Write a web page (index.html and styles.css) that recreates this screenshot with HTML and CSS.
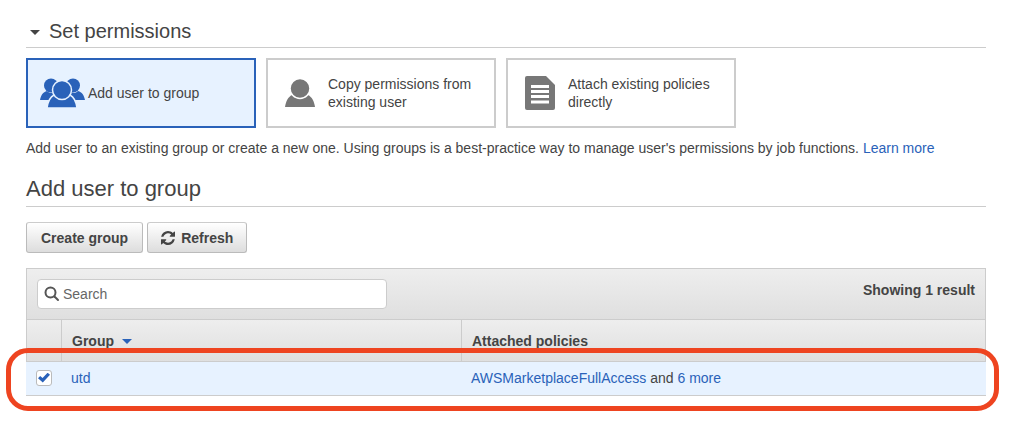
FILE: index.html
```html
<!DOCTYPE html>
<html lang="en">
<head>
  <meta charset="UTF-8" />
  <meta name="viewport" content="width=device-width, initial-scale=1.0"/>
  <title>Set permissions</title>
  <link rel="stylesheet" href="styles.css">
</head>
<body>

  <main class="page">
    <h2 class="section-title">
      <button class="toggle" type="button" aria-label="Collapse section"><span class="caret"></span></button>
      Set permissions
    </h2>

    <div class="options">
      <button class="option selected" type="button">
        <svg class="icon-group" width="45" height="30" viewBox="0 0 45 30" aria-hidden="true">
          <circle cx="11" cy="7.500" r="7"/>
          <circle cx="33" cy="7.500" r="7"/>
          <path d="M0 22C1 17 3 14 7 13Q11 17 15 13L19 22Z"/>
          <path d="M45 22C44 17 42 14 38 13Q34 17 30 13L26 22Z"/>
          <path class="outline" d="M7 30C8 23 10 19 14 17H30C34 19 36 23 37 30Z"/>
          <circle class="outline" cx="22" cy="12" r="9.500"/>
        </svg>
        <span>Add user to group</span>
      </button>
      <button class="option" type="button">
        <svg class="icon-user" width="30" height="28" viewBox="0 0 30 28" aria-hidden="true">
          <path d="M0 28C1 22 3 18 7 16H23C27 18 29 22 30 28Z"/>
          <circle class="outline" cx="15" cy="9.500" r="10"/>
        </svg>
        <span>Copy permissions from existing user</span>
      </button>
      <button class="option" type="button">
        <svg class="icon-doc" width="30" height="34" viewBox="0 0 30 34" aria-hidden="true">
          <path d="M2 0H21L30 9V32Q30 34 28 34H2Q0 34 0 32V2Q0 0 2 0Z"/>
          <path class="lines" d="M6 10.500H24M6 15.500H24M6 20.500H24M6 26H24"/>
        </svg>
        <span>Attach existing policies directly</span>
      </button>
    </div>

    <p class="description">Add user to an existing group or create a new one. Using groups is a best-practice way to manage user's permissions by job functions. <a href="#">Learn more</a></p>

    <h2 class="section-title sub">Add user to group</h2>

    <div class="actions">
      <button class="btn" type="button">Create group</button>
      <button class="btn" type="button">
        <svg width="14" height="14" viewBox="0 0 1536 1536" aria-hidden="true"><path d="M1511 928q0 5-1 7-64 268-268 434.500t-478 166.500q-146 0-282.500-55t-243.500-157l-129 129q-19 19-45 19t-45-19-19-45v-448q0-26 19-45t45-19h448q26 0 45 19t19 45-19 45l-137 137q71 66 161 102t187 36q134 0 250-65t186-179q11-17 53-117 8-23 30-23h192q13 0 22.500 9.500t9.500 22.500zm25-800v448q0 26-19 45t-45 19h-448q-26 0-45-19t-19-45 19-45l138-138q-148-137-349-137-134 0-250 65t-186 179q-11 17-53 117-8 23-30 23h-199q-13 0-22.500-9.500t-9.500-22.500v-7q65-268 270-434.500t480-166.500q146 0 284 55.500t245 156.500l130-129q19-19 45-19t45 19 19 45z"/></svg>
        Refresh
      </button>
    </div>

    <div class="groups">
      <div class="toolbar">
        <div class="search">
          <svg width="16" height="16" viewBox="0 0 16 16" aria-hidden="true">
            <circle cx="6.500" cy="6.500" r="5"/>
            <path d="M10.500 10.500L14 14"/>
          </svg>
          <input type="text" id="search" placeholder="Search" aria-label="Search">
        </div>
        <span class="count">Showing 1 result</span>
      </div>
      <table class="group-table">
        <thead>
          <tr>
            <th class="col-check"></th>
            <th class="col-group">Group <span class="caret sort"></span></th>
            <th>Attached policies</th>
          </tr>
        </thead>
        <tbody>
          <tr>
            <td class="col-check"><input type="checkbox" class="check" aria-label="utd" checked></td>
            <td><a href="#">utd</a></td>
            <td><a href="#">AWSMarketplaceFullAccess</a> and <a href="#">6 more</a></td>
          </tr>
        </tbody>
      </table>
      <div class="highlight"></div>
    </div>
  </main>

</body>
</html>
```
FILE: styles.css
```css
* {
  box-sizing: border-box;
}

body {
  margin: 0;
  font-family: "Liberation Sans", Arial, sans-serif;
  font-size: 14px;
  line-height: 18px;
  background: #fff;
  color: #444;
}

button,
input {
  font: inherit;
  color: inherit;
}

a {
  color: #2a62b9;
  text-decoration: none;
}

.page {
  padding: 14px 23px 32px 26px;
}

.section-title {
  display: flex;
  align-items: center;
  margin: 0;
  height: 34px;
  border-bottom: 1px solid #ccc;
  font-size: 20px;
  line-height: 30px;
  font-weight: normal;
}

.section-title.sub {
  height: 36px;
  font-size: 22px;
}

.toggle {
  display: flex;
  padding: 4px 9px 0 4px;
  border: none;
  background: none;
  cursor: pointer;
}

.caret {
  border: 5px solid transparent;
  border-top-color: #444;
  border-bottom: none;
}

.options {
  display: flex;
  gap: 10px;
  margin: 10px 0 11px;
}

.option {
  display: flex;
  align-items: center;
  gap: 13px;
  width: 230px;
  height: 70px;
  padding: 0 17px;
  border: 2px solid #ccc;
  background: #fff;
  text-align: left;
  cursor: pointer;
}

.option svg {
  flex: none;
  fill: #777;
}

.option.selected {
  gap: 3px;
  padding: 0 12px;
  border-color: #2a62b9;
  background: #e7f2ff;
}

.option.selected svg {
  fill: #2a62b9;
}

.outline {
  stroke: #fff;
  stroke-width: 1.5px;
}

.selected .outline {
  stroke: #e7f2ff;
}

.lines {
  stroke: #fff;
  stroke-width: 3px;
}

.description {
  margin: 0 0 14px;
}

.actions {
  display: flex;
  gap: 4px;
  margin: 15px 0;
}

.btn {
  display: flex;
  align-items: center;
  gap: 6px;
  height: 31px;
  padding: 0 14px;
  border: 1px solid #bbb;
  border-top-color: #ccc;
  border-radius: 3px;
  background: linear-gradient(#fff, #ddd);
  font-weight: bold;
  cursor: pointer;
}

.btn + .btn {
  padding: 0 13px;
}

.btn svg {
  fill: #444;
}

.groups {
  position: relative;
}

.toolbar {
  display: flex;
  justify-content: space-between;
  align-items: flex-start;
  height: 51px;
  padding: 10px;
  border: 1px solid #ccc;
  border-bottom: none;
  background: linear-gradient(#eee, #dfdfdf);
}

.search {
  display: flex;
  align-items: center;
  gap: 3px;
  width: 350px;
  height: 30px;
  padding: 0 6px;
  border: 1px solid #ccc;
  border-radius: 4px;
  background: #fff;
}

.search svg {
  flex: none;
  fill: none;
  stroke: #555;
  stroke-width: 2px;
  stroke-linecap: round;
}

.search input {
  flex: 1;
  min-width: 0;
  padding: 0;
  border: none;
  outline: none;
  background: none;
}

.search input::placeholder {
  color: #666;
}

.count {
  padding-top: 2px;
  font-weight: bold;
}

.group-table {
  width: 100%;
  border-collapse: separate;
  border-spacing: 0;
  table-layout: fixed;
}

.group-table th {
  height: 42px;
  padding: 0 10px;
  border-top: 1px solid #ccc;
  border-left: 1px solid #ccc;
  background: linear-gradient(#eee, #dfdfdf);
  text-align: left;
}

.group-table th:last-child {
  border-right: 1px solid #ccc;
}

.group-table td {
  height: 35px;
  padding: 0 10px 2px;
  border-top: 1px solid #ccc;
  border-bottom: 1px solid #ccc;
  background: #e7f2ff;
}

.group-table .col-check {
  width: 35px;
}

.group-table .col-group {
  width: 400px;
}

.sort {
  display: inline-block;
  margin-left: 4px;
  border-top-color: #2a62b9;
  vertical-align: middle;
}

.check {
  display: flex;
  align-items: center;
  justify-content: center;
  appearance: none;
  width: 16px;
  height: 16px;
  margin: 0;
  border: 1px solid #bbb;
  border-radius: 3px;
  background: #fff;
}

.check:checked::before {
  content: "";
  width: 12px;
  height: 10px;
  background: #2a62b9;
  clip-path: polygon(0 58%, 18% 36%, 38% 54%, 80% 2%, 100% 22%, 40% 100%);
}

.highlight {
  position: absolute;
  left: -20px;
  right: -13px;
  bottom: -15px;
  height: 63px;
  border: 5px solid #ee4420;
  border-radius: 22px;
  pointer-events: none;
}
```
